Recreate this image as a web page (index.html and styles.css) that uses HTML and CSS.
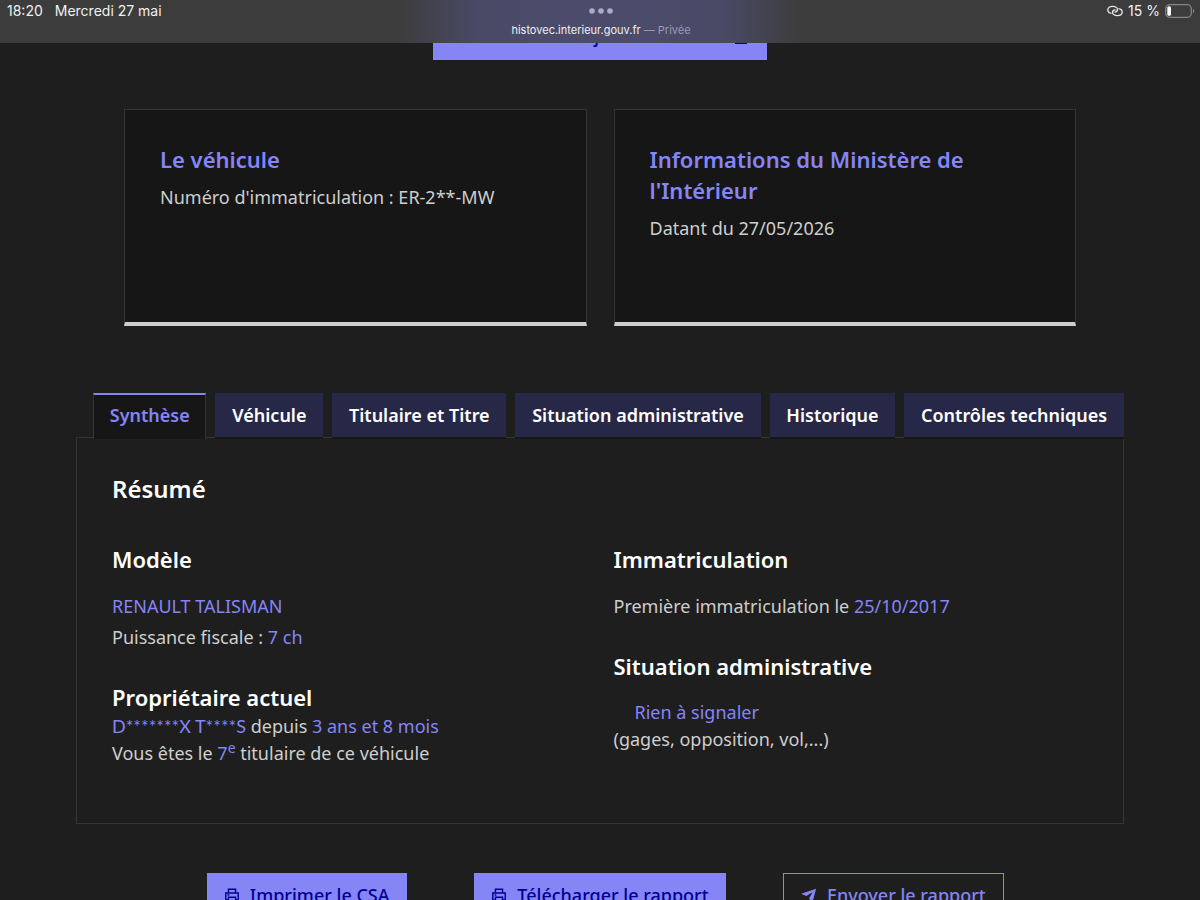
FILE: index.html
```html
<!DOCTYPE html>
<html lang="fr">
<head>
<meta charset="utf-8">
<meta name="viewport" content="width=device-width, initial-scale=1">
<title>HistoVec</title>
<link rel="stylesheet" href="styles.css">
</head>
<body>
<header class="status">
  <div class="status-side"><span>18:20</span><span>Mercredi 27 mai</span></div>
  <div class="address">
    <svg class="dots" width="24" height="6" viewBox="0 0 24 6" aria-hidden="true"><circle cx="3" cy="3" r="2.8"/><circle cx="12" cy="3" r="2.8"/><circle cx="21" cy="3" r="2.8"/></svg>
    <p class="url">histovec.interieur.gouv.fr <span class="private">— Privée</span></p>
  </div>
  <div class="status-side status-right">
    <svg width="16" height="12" viewBox="0 0 16 12" fill="none" stroke="#e8e8e8" stroke-width="1.3" aria-hidden="true"><path d="M4.500 8.300C2.300 8 .8 6.700 .8 4.900 .8 2.800 2.900 1.300 5.600 1.300c2.700 0 4.900 1.400 4.900 3.300 0 1.500-1.400 2.500-3 2.500"/><path d="M11.500 3.700c2.200.3 3.700 1.600 3.700 3.400 0 2.100-2.100 3.600-4.800 3.600-2.700 0-4.900-1.400-4.900-3.300 0-1.500 1.400-2.500 3-2.500"/></svg>
    <span>15 %</span>
    <svg width="30" height="14" viewBox="0 0 30 14" aria-hidden="true"><rect x=".7" y=".7" width="25.600" height="12.600" rx="4" fill="none" stroke="#858585" stroke-width="1.300"/><rect x="2.300" y="2.300" width="3.700" height="9.400" rx="1.500" fill="#fff"/><path d="M28 4.700c1.700.8 1.700 3.800 0 4.600z" fill="#858585"/></svg>
  </div>
</header>
<main class="page">
  <button class="btn btn-update" type="button">Obtenir le CSA à jour du dossier <svg width="16" height="16" viewBox="0 0 16 16" fill="none" stroke="currentColor" stroke-width="2" aria-hidden="true"><path d="M8 1v9M4 6l4 4 4-4M2 15h12"/></svg></button>
  <section class="cards">
    <article class="card"><h2>Le véhicule</h2><p>Numéro d'immatriculation : ER-2**-MW</p></article>
    <article class="card"><h2>Informations du Ministère de l'Intérieur</h2><p>Datant du 27/05/2026</p></article>
  </section>
  <section class="report">
    <div class="tabs" role="tablist">
      <button class="tab tab-active" type="button" role="tab" aria-selected="true">Synthèse</button>
      <button class="tab" type="button" role="tab">Véhicule</button>
      <button class="tab" type="button" role="tab">Titulaire et Titre</button>
      <button class="tab" type="button" role="tab">Situation administrative</button>
      <button class="tab" type="button" role="tab">Historique</button>
      <button class="tab" type="button" role="tab">Contrôles techniques</button>
    </div>
    <div class="panel" role="tabpanel">
      <h2 class="summary-title">Résumé</h2>
      <div class="columns">
        <div>
          <h3>Modèle</h3>
          <p class="spaced"><span class="value">RENAULT TALISMAN</span></p>
          <p class="spaced">Puissance fiscale : <span class="value">7 ch</span></p>
          <h3 class="next">Propriétaire actuel</h3>
          <p><span class="value masked">D*******X T****S</span> depuis <span class="value">3 ans et 8 mois</span></p>
          <p>Vous êtes le <span class="value">7<sup>e</sup></span> titulaire de ce véhicule</p>
        </div>
        <div>
          <h3>Immatriculation</h3>
          <p class="spaced">Première immatriculation le <span class="value">25/10/2017</span></p>
          <h3 class="next">Situation administrative</h3>
          <p class="status-line"><span class="value">Rien à signaler</span></p>
          <p>(gages, opposition, vol,...)</p>
        </div>
      </div>
    </div>
  </section>
  <div class="actions">
    <button class="btn" type="button"><svg width="16" height="16" viewBox="0 0 18 18" fill="none" stroke="currentColor" stroke-width="1.600" aria-hidden="true"><path d="M5 6V2.500h8V6M4.500 14.500H2V6.800h14v7.700h-2.500M5 11.500h8v5H5zM4 9h2"/></svg>Imprimer le CSA</button>
    <button class="btn" type="button"><svg width="16" height="16" viewBox="0 0 18 18" fill="none" stroke="currentColor" stroke-width="1.600" aria-hidden="true"><path d="M5 6V2.500h8V6M4.500 14.500H2V6.800h14v7.700h-2.500M5 11.500h8v5H5zM4 9h2"/></svg>Télécharger le rapport</button>
    <button class="btn btn-outline" type="button"><svg width="16" height="16" viewBox="0 0 18 18" fill="currentColor" aria-hidden="true"><path d="M0 7.500 17 2l-4 15-4-4 4-7-7 4z"/></svg>Envoyer le rapport</button>
  </div>
</main>
</body>
</html>
```
FILE: styles.css
```css
* { box-sizing: border-box; }
html { background: #1e1e1e; overflow: hidden; }
body { margin: 0; background: #1e1e1e; color: #cecece; font: 18px/27px "Noto Sans", sans-serif; }
h2, h3, p { margin: 0; }
button { font-family: inherit; }
.status {
  position: relative; z-index: 1;
  display: grid; grid-template-columns: 1fr auto 1fr;
  height: 43px; padding: 0 5px 0 7px;
  background: linear-gradient(90deg, #3c3c3c 33%, #4a4a67 40%, #4c4b6c 50%, #4a4a67 60%, #3c3c3c 67%);
  color: #f0f0f0; font: 14px/22px Inter, sans-serif;
}
.status-side { display: flex; align-items: center; gap: 12px; height: 22px; }
.status-right { justify-content: flex-end; gap: 5px; }
.address { display: flex; flex-direction: column; align-items: center; padding-top: 8px; gap: 8px; }
.dots { fill: #adabc6; }
.url { font-size: 11px; line-height: 16px; }
.private { color: #9c9ab2; }
.page { display: flex; flex-direction: column; }
.btn {
  display: flex; align-items: center; gap: 10px;
  height: 45px; padding: 0 17px 2px; border: 0;
  background: #8585f6; color: #000091;
  font-size: 18px; font-weight: 500; white-space: nowrap;
}
.btn-outline { background: none; border: 1px solid #8585f6; color: #8585f6; }
.btn-update { align-self: center; margin-top: -28px; padding: 0 18px 4px; }
.cards { display: grid; grid-template-columns: 1fr 1fr; gap: 27px; margin: 49px 124px 0; }
.card { min-height: 217px; padding: 34px 35px; background: #161616; border: 1px solid #353535; border-bottom: 4px solid #cecece; }
.card h2 { color: #8585f6; font-size: 22px; line-height: 31px; font-weight: 600; margin-bottom: 9px; }
.report { margin: 67px 76px 0; }
.tabs { display: flex; gap: 9px; padding-left: 17px; height: 46px; margin-bottom: -2px; position: relative; }
.tab { flex: 1 1 auto; padding: 0 16px; border: 0; background: #272747; border-bottom: 2px solid #161616; color: #fff; font-size: 18px; font-weight: 600; white-space: nowrap; }
.tab-active { background: #161616; color: #8585f6; border: 1px solid #353535; border-top: 2px solid #8585f6; border-bottom: 0; padding: 0 15px 4px; }
.panel { border: 1px solid #353535; min-height: 387px; padding: 35px; }
.summary-title { color: #fff; font-size: 24px; line-height: 32px; font-weight: 600; }
.columns { display: grid; grid-template-columns: 1fr 1fr; gap: 27px; margin-top: 39px; }
h3 { color: #fff; font-size: 22px; line-height: 31px; font-weight: 600; }
.spaced { margin-bottom: 4px; }
h3 + .spaced { margin-top: 18px; }
.next { margin-top: 31px; }
.value { color: #8585f6; }
.masked { font-family: Lato, sans-serif; line-height: 1; }
sup { font-size: 14px; line-height: 0; }
.status-line { margin-top: 17px; padding-left: 21px; }
.actions { display: grid; grid-template-columns: repeat(3, 1fr); justify-items: center; margin: 49px 160px 0; }
```
